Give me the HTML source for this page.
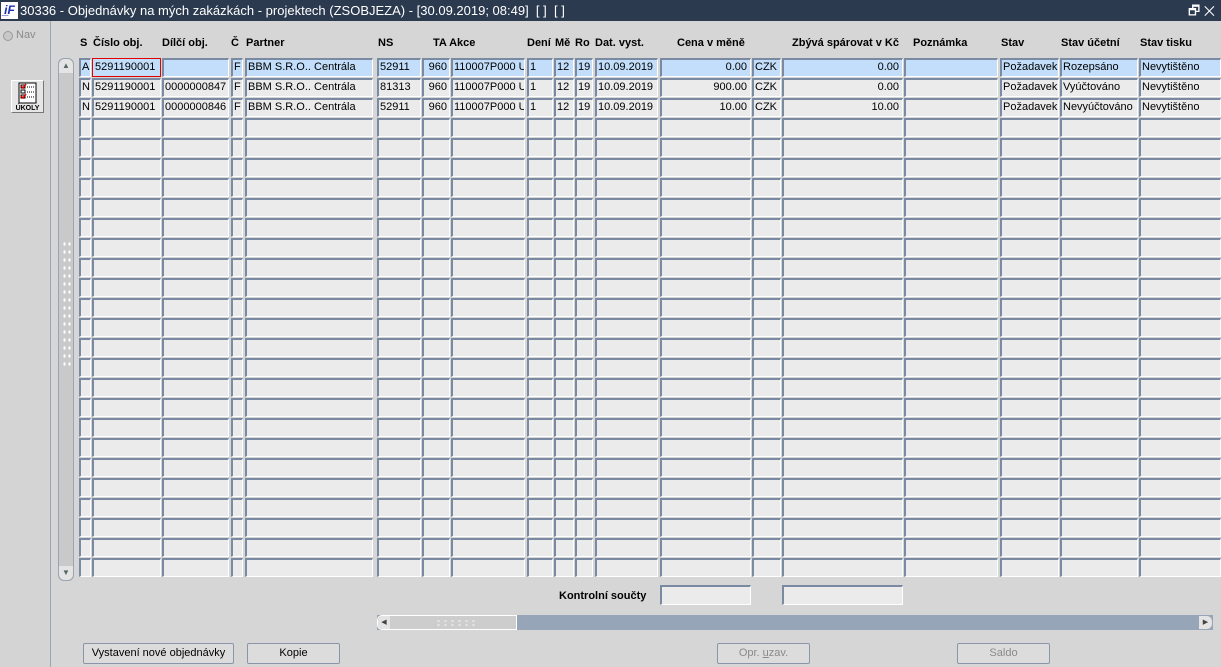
<!DOCTYPE html>
<html><head><meta charset="utf-8"><style>
*{margin:0;padding:0;box-sizing:border-box}
body{width:1221px;height:667px;overflow:hidden;background:#d6d6d6;font-family:"Liberation Sans",Arial,sans-serif;font-size:11px;color:#000;position:relative}
#tb{position:absolute;left:0;top:0;width:1221px;height:21px;background:#2b3a4f;color:#fff;font-size:13px;line-height:21px;padding-left:20px}
#ic{position:absolute;left:1px;top:2px;width:17px;height:17px;background:#fff;color:#1a2fb0;font:bold italic 12px "Liberation Sans";line-height:17px;text-align:center}
#lp{position:absolute;left:0;top:21px;width:51px;height:646px;background:#d4d4d4;border-right:1px solid #9aa4b2}
.h{position:absolute;top:37px;font-weight:bold;font-size:11px}
.r{position:absolute;left:0;height:19px;width:1221px}
.r i{position:absolute;top:0;height:19px;background:#ebebeb;border:1px solid #fff;border-top-color:#7b8aa3;border-left-color:#7b8aa3;border-top-width:2px;border-left-width:2px;font-style:normal;line-height:15px;padding-left:1px;white-space:nowrap;overflow:hidden;font-size:11px}
.s i{background:#c2defa}
.c1{left:79px;width:12px}.c2{left:92px;width:69px}.c3{left:162px;width:67px}.c4{left:231px;width:12px}.c5{left:245px;width:128px}.c6{left:377px;width:44px}.c7{left:422px;width:28px;text-align:right;padding-right:2px}.c8{left:451px;width:74px}.c9{left:527px;width:26px}.c10{left:554px;width:20px}.c11{left:575px;width:18px}.c12{left:595px;width:63px}.c13{left:660px;width:91px;text-align:right;padding-right:3px}.c14{left:752px;width:29px}.c15{left:782px;width:121px;text-align:right;padding-right:3px}.c16{left:904px;width:94px}.c17{left:1000px;width:59px}.c18{left:1060px;width:78px}.c19{left:1139px;width:82px}
.btn{position:absolute;top:643px;height:21px;background:#dcdcdc;border:1px solid #8a96a8;border-radius:2px;text-align:center;line-height:19px;font-size:11px}
.box{position:absolute;top:585px;height:20px;background:#ebebeb;border:1px solid #fff;border-top:2px solid #7b8aa3;border-left:2px solid #7b8aa3}
</style></head><body>
<div id="tb"><div id="ic">i̲F</div>30336 - Objednávky na mých zakázkách - projektech (ZSOBJEZA) - [30.09.2019; 08:49]&nbsp; [ ]&nbsp; [ ]<span style="position:absolute;right:6px;top:0;font-size:13px">🗗 ✕</span></div>
<div id="lp">
<div style="position:absolute;left:3px;top:10px;width:10px;height:10px;border-radius:50%;background:#c8c8c8;border:1px solid #999"></div>
<div style="position:absolute;left:16px;top:8px;color:#8a8a8a">Nav</div>
<div style="position:absolute;left:11px;top:59px;width:33px;height:33px;background:#e6e6e6;border:1px solid #fff;border-right-color:#777;border-bottom-color:#777">
<svg width="31" height="31" viewBox="0 0 31 31"><rect x="7" y="2" width="17" height="20" fill="#fff" stroke="#000"/><rect x="9" y="4" width="4" height="3" fill="none" stroke="#000"/><rect x="9" y="9" width="4" height="3" fill="none" stroke="#000"/><rect x="9" y="14" width="4" height="3" fill="none" stroke="#000"/><path d="M9 5l2 2 3-4M9 15l2 2 3-4" stroke="#d00" stroke-width="1.5" fill="none"/><path d="M15 6h7M15 11h7M15 16h7" stroke="#000" stroke-dasharray="1 1"/><text x="15.5" y="29" font-size="7" font-weight="bold" text-anchor="middle" font-family="Liberation Sans">ÚKOLY</text></svg></div>
</div>
<div class="h" style="left:80px">S</div><div class="h" style="left:93px">Číslo obj.</div><div class="h" style="left:162px">Dílčí obj.</div><div class="h" style="left:231px">Č</div><div class="h" style="left:246px">Partner</div><div class="h" style="left:378px">NS</div><div class="h" style="left:433px">TA Akce</div><div class="h" style="left:527px">Dení</div><div class="h" style="left:555px">Mě</div><div class="h" style="left:575px">Ro</div><div class="h" style="left:595px">Dat. vyst.</div><div class="h" style="left:677px">Cena v měně</div><div class="h" style="left:792px">Zbývá spárovat v Kč</div><div class="h" style="left:913px">Poznámka</div><div class="h" style="left:1001px">Stav</div><div class="h" style="left:1061px">Stav účetní</div><div class="h" style="left:1140px">Stav tisku</div>
<!-- v scrollbar -->
<div style="position:absolute;left:58px;top:58px;width:16px;height:523px;background:#c9c9c9;border:1px solid #9aa4b2;border-radius:6px"></div>
<div style="position:absolute;left:59px;top:59px;width:14px;height:14px;background:#e4e4e4;border-radius:6px 6px 0 0;text-align:center;font-size:8px;line-height:14px;color:#566">▲</div>
<div style="position:absolute;left:59px;top:566px;width:14px;height:14px;background:#e4e4e4;border-radius:0 0 6px 6px;text-align:center;font-size:8px;line-height:14px;color:#566">▼</div>
<div style="position:absolute;left:62px;top:240px;width:9px;height:130px;background-image:radial-gradient(#fff 1px,transparent 1.2px);background-size:5px 8px"></div>
<div class="r s" style="top:58px"><i class="c1">A</i><i class="c2" style="border:1px solid #e00000;padding-left:2px;line-height:17px">5291190001</i><i class="c3"></i><i class="c4">F</i><i class="c5">BBM S.R.O.. Centrála</i><i class="c6">52911</i><i class="c7">960</i><i class="c8">110007P000 U</i><i class="c9">1</i><i class="c10">12</i><i class="c11">19</i><i class="c12">10.09.2019</i><i class="c13">0.00</i><i class="c14">CZK</i><i class="c15">0.00</i><i class="c16"></i><i class="c17">Požadavek</i><i class="c18">Rozepsáno</i><i class="c19">Nevytištěno</i></div>
<div class="r" style="top:78px"><i class="c1">N</i><i class="c2">5291190001</i><i class="c3">0000000847</i><i class="c4">F</i><i class="c5">BBM S.R.O.. Centrála</i><i class="c6">81313</i><i class="c7">960</i><i class="c8">110007P000 U</i><i class="c9">1</i><i class="c10">12</i><i class="c11">19</i><i class="c12">10.09.2019</i><i class="c13">900.00</i><i class="c14">CZK</i><i class="c15">0.00</i><i class="c16"></i><i class="c17">Požadavek</i><i class="c18">Vyúčtováno</i><i class="c19">Nevytištěno</i></div>
<div class="r" style="top:98px"><i class="c1">N</i><i class="c2">5291190001</i><i class="c3">0000000846</i><i class="c4">F</i><i class="c5">BBM S.R.O.. Centrála</i><i class="c6">52911</i><i class="c7">960</i><i class="c8">110007P000 U</i><i class="c9">1</i><i class="c10">12</i><i class="c11">19</i><i class="c12">10.09.2019</i><i class="c13">10.00</i><i class="c14">CZK</i><i class="c15">10.00</i><i class="c16"></i><i class="c17">Požadavek</i><i class="c18">Nevyúčtováno</i><i class="c19">Nevytištěno</i></div>
<div id="empty"></div>
<div class="r" style="top:118px"><i class="c1"></i><i class="c2"></i><i class="c3"></i><i class="c4"></i><i class="c5"></i><i class="c6"></i><i class="c7"></i><i class="c8"></i><i class="c9"></i><i class="c10"></i><i class="c11"></i><i class="c12"></i><i class="c13"></i><i class="c14"></i><i class="c15"></i><i class="c16"></i><i class="c17"></i><i class="c18"></i><i class="c19"></i></div>
<div class="r" style="top:138px"><i class="c1"></i><i class="c2"></i><i class="c3"></i><i class="c4"></i><i class="c5"></i><i class="c6"></i><i class="c7"></i><i class="c8"></i><i class="c9"></i><i class="c10"></i><i class="c11"></i><i class="c12"></i><i class="c13"></i><i class="c14"></i><i class="c15"></i><i class="c16"></i><i class="c17"></i><i class="c18"></i><i class="c19"></i></div>
<div class="r" style="top:158px"><i class="c1"></i><i class="c2"></i><i class="c3"></i><i class="c4"></i><i class="c5"></i><i class="c6"></i><i class="c7"></i><i class="c8"></i><i class="c9"></i><i class="c10"></i><i class="c11"></i><i class="c12"></i><i class="c13"></i><i class="c14"></i><i class="c15"></i><i class="c16"></i><i class="c17"></i><i class="c18"></i><i class="c19"></i></div>
<div class="r" style="top:178px"><i class="c1"></i><i class="c2"></i><i class="c3"></i><i class="c4"></i><i class="c5"></i><i class="c6"></i><i class="c7"></i><i class="c8"></i><i class="c9"></i><i class="c10"></i><i class="c11"></i><i class="c12"></i><i class="c13"></i><i class="c14"></i><i class="c15"></i><i class="c16"></i><i class="c17"></i><i class="c18"></i><i class="c19"></i></div>
<div class="r" style="top:198px"><i class="c1"></i><i class="c2"></i><i class="c3"></i><i class="c4"></i><i class="c5"></i><i class="c6"></i><i class="c7"></i><i class="c8"></i><i class="c9"></i><i class="c10"></i><i class="c11"></i><i class="c12"></i><i class="c13"></i><i class="c14"></i><i class="c15"></i><i class="c16"></i><i class="c17"></i><i class="c18"></i><i class="c19"></i></div>
<div class="r" style="top:218px"><i class="c1"></i><i class="c2"></i><i class="c3"></i><i class="c4"></i><i class="c5"></i><i class="c6"></i><i class="c7"></i><i class="c8"></i><i class="c9"></i><i class="c10"></i><i class="c11"></i><i class="c12"></i><i class="c13"></i><i class="c14"></i><i class="c15"></i><i class="c16"></i><i class="c17"></i><i class="c18"></i><i class="c19"></i></div>
<div class="r" style="top:238px"><i class="c1"></i><i class="c2"></i><i class="c3"></i><i class="c4"></i><i class="c5"></i><i class="c6"></i><i class="c7"></i><i class="c8"></i><i class="c9"></i><i class="c10"></i><i class="c11"></i><i class="c12"></i><i class="c13"></i><i class="c14"></i><i class="c15"></i><i class="c16"></i><i class="c17"></i><i class="c18"></i><i class="c19"></i></div>
<div class="r" style="top:258px"><i class="c1"></i><i class="c2"></i><i class="c3"></i><i class="c4"></i><i class="c5"></i><i class="c6"></i><i class="c7"></i><i class="c8"></i><i class="c9"></i><i class="c10"></i><i class="c11"></i><i class="c12"></i><i class="c13"></i><i class="c14"></i><i class="c15"></i><i class="c16"></i><i class="c17"></i><i class="c18"></i><i class="c19"></i></div>
<div class="r" style="top:278px"><i class="c1"></i><i class="c2"></i><i class="c3"></i><i class="c4"></i><i class="c5"></i><i class="c6"></i><i class="c7"></i><i class="c8"></i><i class="c9"></i><i class="c10"></i><i class="c11"></i><i class="c12"></i><i class="c13"></i><i class="c14"></i><i class="c15"></i><i class="c16"></i><i class="c17"></i><i class="c18"></i><i class="c19"></i></div>
<div class="r" style="top:298px"><i class="c1"></i><i class="c2"></i><i class="c3"></i><i class="c4"></i><i class="c5"></i><i class="c6"></i><i class="c7"></i><i class="c8"></i><i class="c9"></i><i class="c10"></i><i class="c11"></i><i class="c12"></i><i class="c13"></i><i class="c14"></i><i class="c15"></i><i class="c16"></i><i class="c17"></i><i class="c18"></i><i class="c19"></i></div>
<div class="r" style="top:318px"><i class="c1"></i><i class="c2"></i><i class="c3"></i><i class="c4"></i><i class="c5"></i><i class="c6"></i><i class="c7"></i><i class="c8"></i><i class="c9"></i><i class="c10"></i><i class="c11"></i><i class="c12"></i><i class="c13"></i><i class="c14"></i><i class="c15"></i><i class="c16"></i><i class="c17"></i><i class="c18"></i><i class="c19"></i></div>
<div class="r" style="top:338px"><i class="c1"></i><i class="c2"></i><i class="c3"></i><i class="c4"></i><i class="c5"></i><i class="c6"></i><i class="c7"></i><i class="c8"></i><i class="c9"></i><i class="c10"></i><i class="c11"></i><i class="c12"></i><i class="c13"></i><i class="c14"></i><i class="c15"></i><i class="c16"></i><i class="c17"></i><i class="c18"></i><i class="c19"></i></div>
<div class="r" style="top:358px"><i class="c1"></i><i class="c2"></i><i class="c3"></i><i class="c4"></i><i class="c5"></i><i class="c6"></i><i class="c7"></i><i class="c8"></i><i class="c9"></i><i class="c10"></i><i class="c11"></i><i class="c12"></i><i class="c13"></i><i class="c14"></i><i class="c15"></i><i class="c16"></i><i class="c17"></i><i class="c18"></i><i class="c19"></i></div>
<div class="r" style="top:378px"><i class="c1"></i><i class="c2"></i><i class="c3"></i><i class="c4"></i><i class="c5"></i><i class="c6"></i><i class="c7"></i><i class="c8"></i><i class="c9"></i><i class="c10"></i><i class="c11"></i><i class="c12"></i><i class="c13"></i><i class="c14"></i><i class="c15"></i><i class="c16"></i><i class="c17"></i><i class="c18"></i><i class="c19"></i></div>
<div class="r" style="top:398px"><i class="c1"></i><i class="c2"></i><i class="c3"></i><i class="c4"></i><i class="c5"></i><i class="c6"></i><i class="c7"></i><i class="c8"></i><i class="c9"></i><i class="c10"></i><i class="c11"></i><i class="c12"></i><i class="c13"></i><i class="c14"></i><i class="c15"></i><i class="c16"></i><i class="c17"></i><i class="c18"></i><i class="c19"></i></div>
<div class="r" style="top:418px"><i class="c1"></i><i class="c2"></i><i class="c3"></i><i class="c4"></i><i class="c5"></i><i class="c6"></i><i class="c7"></i><i class="c8"></i><i class="c9"></i><i class="c10"></i><i class="c11"></i><i class="c12"></i><i class="c13"></i><i class="c14"></i><i class="c15"></i><i class="c16"></i><i class="c17"></i><i class="c18"></i><i class="c19"></i></div>
<div class="r" style="top:438px"><i class="c1"></i><i class="c2"></i><i class="c3"></i><i class="c4"></i><i class="c5"></i><i class="c6"></i><i class="c7"></i><i class="c8"></i><i class="c9"></i><i class="c10"></i><i class="c11"></i><i class="c12"></i><i class="c13"></i><i class="c14"></i><i class="c15"></i><i class="c16"></i><i class="c17"></i><i class="c18"></i><i class="c19"></i></div>
<div class="r" style="top:458px"><i class="c1"></i><i class="c2"></i><i class="c3"></i><i class="c4"></i><i class="c5"></i><i class="c6"></i><i class="c7"></i><i class="c8"></i><i class="c9"></i><i class="c10"></i><i class="c11"></i><i class="c12"></i><i class="c13"></i><i class="c14"></i><i class="c15"></i><i class="c16"></i><i class="c17"></i><i class="c18"></i><i class="c19"></i></div>
<div class="r" style="top:478px"><i class="c1"></i><i class="c2"></i><i class="c3"></i><i class="c4"></i><i class="c5"></i><i class="c6"></i><i class="c7"></i><i class="c8"></i><i class="c9"></i><i class="c10"></i><i class="c11"></i><i class="c12"></i><i class="c13"></i><i class="c14"></i><i class="c15"></i><i class="c16"></i><i class="c17"></i><i class="c18"></i><i class="c19"></i></div>
<div class="r" style="top:498px"><i class="c1"></i><i class="c2"></i><i class="c3"></i><i class="c4"></i><i class="c5"></i><i class="c6"></i><i class="c7"></i><i class="c8"></i><i class="c9"></i><i class="c10"></i><i class="c11"></i><i class="c12"></i><i class="c13"></i><i class="c14"></i><i class="c15"></i><i class="c16"></i><i class="c17"></i><i class="c18"></i><i class="c19"></i></div>
<div class="r" style="top:518px"><i class="c1"></i><i class="c2"></i><i class="c3"></i><i class="c4"></i><i class="c5"></i><i class="c6"></i><i class="c7"></i><i class="c8"></i><i class="c9"></i><i class="c10"></i><i class="c11"></i><i class="c12"></i><i class="c13"></i><i class="c14"></i><i class="c15"></i><i class="c16"></i><i class="c17"></i><i class="c18"></i><i class="c19"></i></div>
<div class="r" style="top:538px"><i class="c1"></i><i class="c2"></i><i class="c3"></i><i class="c4"></i><i class="c5"></i><i class="c6"></i><i class="c7"></i><i class="c8"></i><i class="c9"></i><i class="c10"></i><i class="c11"></i><i class="c12"></i><i class="c13"></i><i class="c14"></i><i class="c15"></i><i class="c16"></i><i class="c17"></i><i class="c18"></i><i class="c19"></i></div>
<div class="r" style="top:558px"><i class="c1"></i><i class="c2"></i><i class="c3"></i><i class="c4"></i><i class="c5"></i><i class="c6"></i><i class="c7"></i><i class="c8"></i><i class="c9"></i><i class="c10"></i><i class="c11"></i><i class="c12"></i><i class="c13"></i><i class="c14"></i><i class="c15"></i><i class="c16"></i><i class="c17"></i><i class="c18"></i><i class="c19"></i></div>
<div style="position:absolute;left:559px;top:590px;font-weight:bold">Kontrolní součty</div>
<div class="box" style="left:660px;width:91px"></div>
<div class="box" style="left:782px;width:121px"></div>
<!-- h scrollbar -->
<div style="position:absolute;left:377px;top:615px;width:836px;height:15px;background:#96a5b7"></div>
<div style="position:absolute;left:377px;top:615px;width:140px;height:15px;background:#cdcdcd;border:1px solid #fff;border-radius:5px 0 0 5px"></div>
<div style="position:absolute;left:378px;top:616px;width:12px;height:13px;background:#e4e4e4;border-radius:5px 0 0 5px;font-size:7px;line-height:13px;text-align:center;color:#444">◀</div>
<div style="position:absolute;left:1199px;top:616px;width:13px;height:13px;background:#e4e4e4;border-radius:0 5px 5px 0;font-size:7px;line-height:13px;text-align:center;color:#444">▶</div>
<div style="position:absolute;left:435px;top:619px;width:42px;height:7px;background-image:radial-gradient(#fff 1px,transparent 1.2px);background-size:7px 4px"></div>
<div class="btn" style="left:83px;width:151px">Vystavení nové objednávky</div>
<div class="btn" style="left:247px;width:93px">Kopie</div>
<div class="btn" style="left:717px;width:93px;color:#8a8a8a">Opr. <u>u</u>zav.</div>
<div class="btn" style="left:957px;width:93px;color:#8a8a8a">Saldo</div>
</body></html>
